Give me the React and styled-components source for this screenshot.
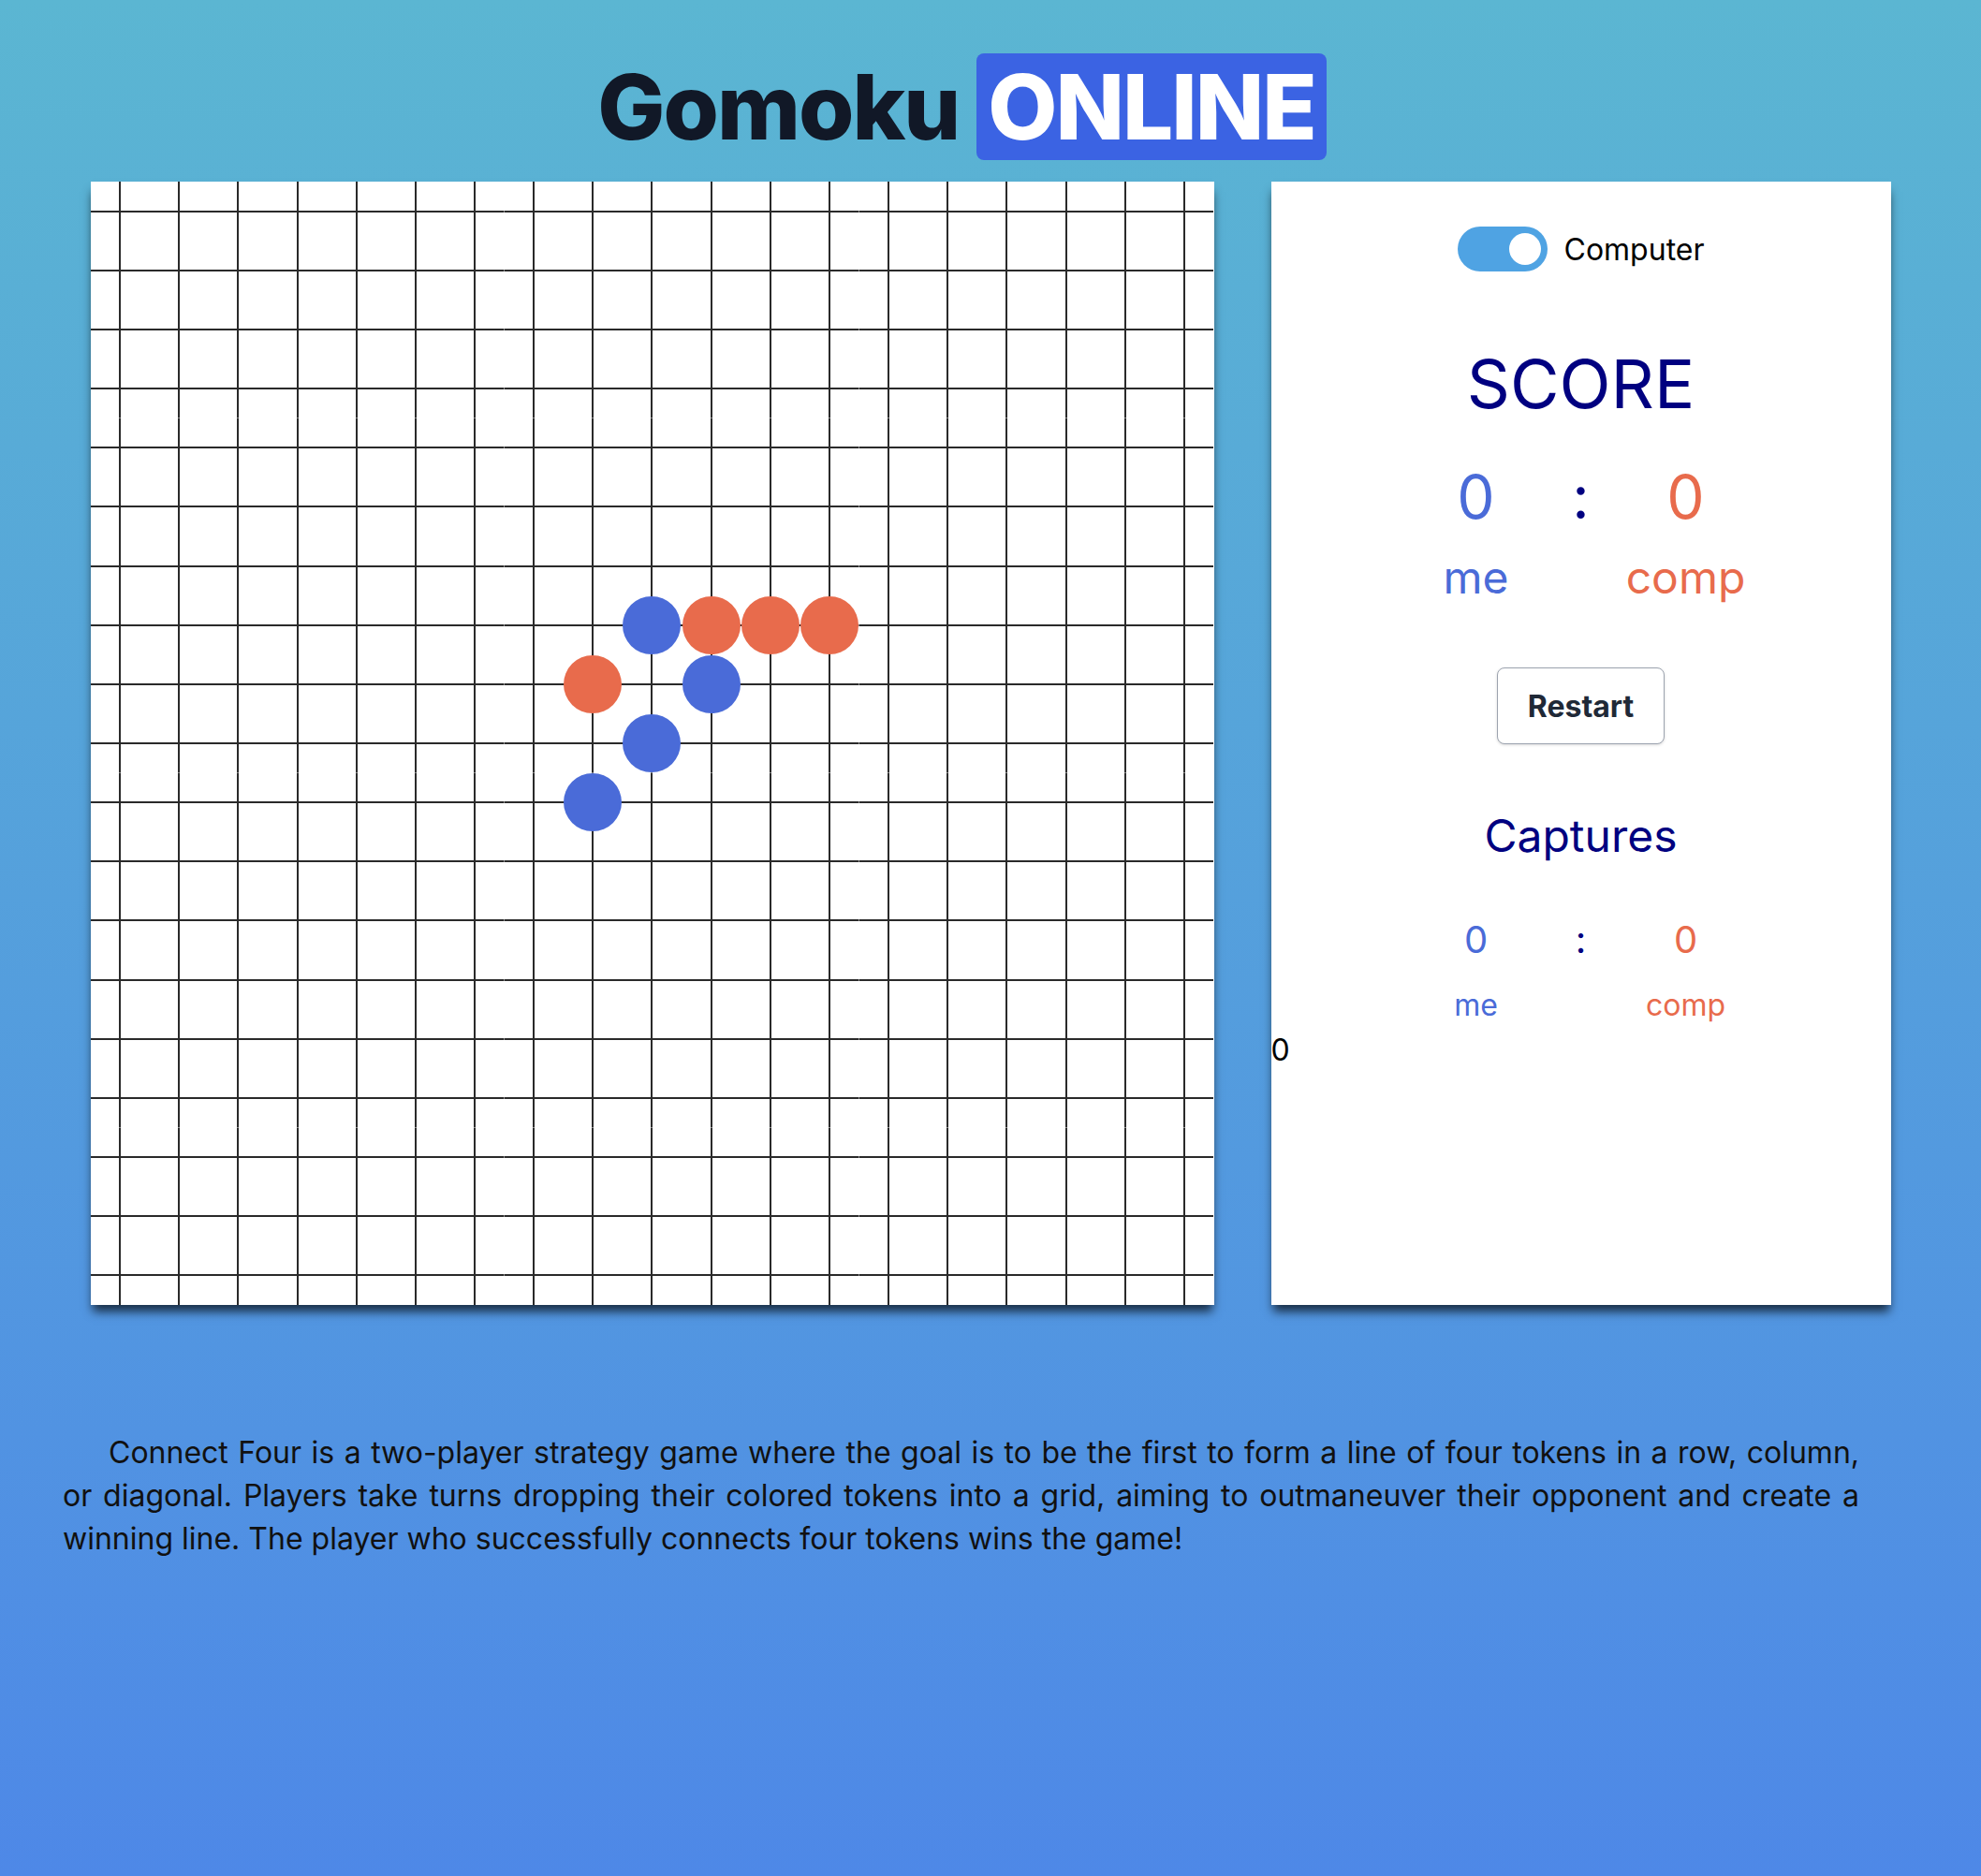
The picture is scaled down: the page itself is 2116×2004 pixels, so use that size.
import React from 'react';
import styled, { createGlobalStyle } from 'styled-components';

const BLUE = '#4a6bd8';
const ORANGE = '#e86b4c';
const NAVY = '#000080';
const SIZE = 19;

// stones on the board: [row, col, colour]
const STONES = [
  [7, 9, BLUE],
  [7, 10, ORANGE],
  [7, 11, ORANGE],
  [7, 12, ORANGE],
  [8, 8, ORANGE],
  [8, 10, BLUE],
  [9, 9, BLUE],
  [10, 8, BLUE],
];

const GlobalStyle = createGlobalStyle`
  html, body {
    margin: 0;
    padding: 0;
  }
  body {
    font-family: Inter, "Noto Sans", sans-serif;
  }
`;

const Page = styled.div`
  min-height: 100vh;
  box-sizing: border-box;
  padding-top: 57px;
  display: flex;
  flex-direction: column;
  align-items: center;
  background: linear-gradient(180deg, #5bb6d2 0%, #4e88e7 100%);
`;

const Title = styled.h1`
  margin: 0;
  padding-right: 61px;
  display: flex;
  align-items: center;
  gap: 19px;
  font-size: 96px;
  font-weight: 800;
  line-height: 1;
  letter-spacing: -2px;
  color: #111827;
`;

const Badge = styled.span`
  background: #3b63e3;
  color: #fff;
  padding: 9px 12px;
  border-radius: 8px;
`;

const GameRow = styled.div`
  margin-top: 23px;
  display: flex;
  gap: 61px;
  align-items: stretch;
`;

const Board = styled.div`
  width: 1200px;
  height: 1200px;
  display: grid;
  grid-template-columns: repeat(${SIZE}, 1fr);
  grid-template-rows: repeat(${SIZE}, 1fr);
  background: #fff;
  box-shadow: 0 9px 10px -2px rgba(0, 0, 0, 0.7);
`;

const Cell = styled.div`
  display: flex;
  align-items: center;
  justify-content: center;
  background:
    linear-gradient(#2a2a2a, #2a2a2a) center / 100% 2px no-repeat,
    linear-gradient(#2a2a2a, #2a2a2a) center / 2px 100% no-repeat,
    #fff;
`;

const Stone = styled.div`
  width: 62px;
  height: 62px;
  border-radius: 50%;
  background: ${(p) => p.$color};
`;

const Panel = styled.div`
  width: 662px;
  box-sizing: border-box;
  padding-top: 48px;
  display: flex;
  flex-direction: column;
  align-items: center;
  background: #fff;
  box-shadow: 0 9px 10px -2px rgba(0, 0, 0, 0.7);
`;

const ToggleRow = styled.label`
  display: flex;
  align-items: center;
  gap: 18px;
  height: 48px;
  font-size: 32px;
  color: #000;
`;

const Switch = styled.span`
  width: 96px;
  height: 48px;
  box-sizing: border-box;
  padding: 0 7px;
  display: flex;
  align-items: center;
  justify-content: ${(p) => (p.$on ? 'flex-end' : 'flex-start')};
  border-radius: 24px;
  background: ${(p) => (p.$on ? '#4fa3e3' : '#cbd5e1')};
`;

const Knob = styled.span`
  width: 34px;
  height: 34px;
  border-radius: 50%;
  background: #fff;
`;

const Heading = styled.h2`
  margin: ${(p) => p.$top}px 0 0;
  font-size: ${(p) => p.$size}px;
  line-height: ${(p) => p.$line}px;
  font-weight: 400;
  color: ${NAVY};
`;

const ScoreGrid = styled.div`
  margin-top: ${(p) => p.$top}px;
  display: grid;
  grid-template-columns: 160px 64px 160px;
  text-align: center;
`;

const ScoreValue = styled.div`
  font-size: ${(p) => p.$size}px;
  line-height: ${(p) => p.$line}px;
  margin-bottom: ${(p) => p.$gap || 0}px;
  color: ${(p) => p.$color};
`;

const RestartButton = styled.button`
  margin-top: 64px;
  height: 82px;
  padding: 0 32px;
  border: 1.5px solid #9ca3af;
  border-radius: 8px;
  background: #fff;
  box-shadow: 0 1px 3px rgba(0, 0, 0, 0.15);
  font-family: Inter, "Noto Sans", sans-serif;
  font-size: 32px;
  font-weight: 700;
  color: #1f2937;
`;

const StrayCount = styled.div`
  align-self: flex-start;
  font-size: 32px;
  line-height: 48px;
  color: #000;
`;

const Description = styled.p`
  align-self: flex-start;
  margin: 135px 0 0 67px;
  width: 1919px;
  font-size: 32px;
  line-height: 46px;
  text-align: justify;
  text-indent: 49px;
  color: #111;
`;

const Score = ({ top, size, line, labelSize, labelLine, gap, me, comp }) => (
  <ScoreGrid $top={top}>
    <ScoreValue $size={size} $line={line} $gap={gap} $color={BLUE}>{me}</ScoreValue>
    <ScoreValue $size={size} $line={line} $gap={gap} $color={NAVY}>:</ScoreValue>
    <ScoreValue $size={size} $line={line} $gap={gap} $color={ORANGE}>{comp}</ScoreValue>
    <ScoreValue $size={labelSize} $line={labelLine} $color={BLUE}>me</ScoreValue>
    <ScoreValue $size={labelSize} $line={labelLine} />
    <ScoreValue $size={labelSize} $line={labelLine} $color={ORANGE}>comp</ScoreValue>
  </ScoreGrid>
);

const App = () => {
  const stoneAt = (r, c) => STONES.find(([sr, sc]) => sr === r && sc === c);

  const cells = [];
  for (let r = 0; r < SIZE; r++) {
    for (let c = 0; c < SIZE; c++) {
      const stone = stoneAt(r, c);
      cells.push(<Cell key={r + '-' + c}>{stone && <Stone $color={stone[2]} />}</Cell>);
    }
  }

  return (
    <>
      <GlobalStyle />
      <Page>
        <Title>
          Gomoku <Badge>ONLINE</Badge>
        </Title>

        <GameRow>
          <Board>{cells}</Board>

          <Panel>
            <ToggleRow>
              <Switch $on>
                <Knob />
              </Switch>
              Computer
            </ToggleRow>

            <Heading $top={80} $size={72} $line={80}>SCORE</Heading>
            <Score top={41} size={64} line={80} gap={14} labelSize={48} labelLine={64} me={0} comp={0} />

            <RestartButton>Restart</RestartButton>

            <Heading $top={66} $size={48} $line={64}>Captures</Heading>
            <Score top={51} size={40} line={56} gap={18} labelSize={32} labelLine={48} me={0} comp={0} />

            <StrayCount>0</StrayCount>
          </Panel>
        </GameRow>

        <Description>
          Connect Four is a two-player strategy game where the goal is to be the first to form a line of four
          tokens in a row, column, or diagonal. Players take turns dropping their colored tokens into a grid,
          aiming to outmaneuver their opponent and create a winning line. The player who successfully connects
          four tokens wins the game!
        </Description>
      </Page>
    </>
  );
};

export default App;
